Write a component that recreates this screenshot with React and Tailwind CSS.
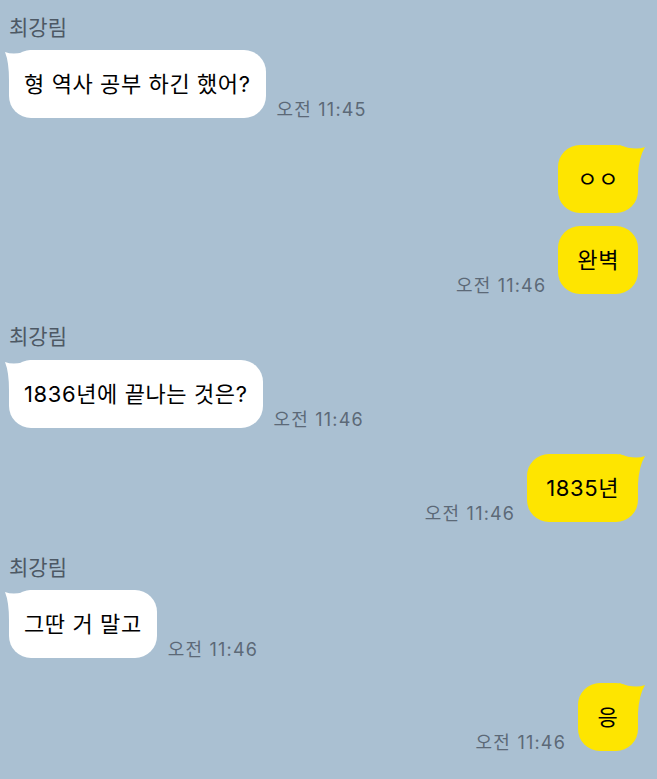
import React from 'react';

const font = { fontFamily: 'Inter, "Noto Sans CJK KR", "Noto Sans", sans-serif' };

function LeftTail() {
  return (
    <svg className="absolute -left-[4px] top-0" width="28" height="30" viewBox="0 0 28 30">
      <path d="M0 2 Q10 6 26 0 L26 18 L4 30 Q4 12 0 2 Z" fill="#ffffff" />
    </svg>
  );
}

function RightTail() {
  return (
    <svg className="absolute -right-[7px] top-0" width="28" height="30" viewBox="0 0 28 30">
      <path d="M28 2 Q18 6 2 0 L2 18 L21 30 Q22 12 28 2 Z" fill="#fee500" />
    </svg>
  );
}

function Name({ className = '' }) {
  return (
    <div className={`pl-[9px] text-[21px] leading-[24px] text-[#4d5864] ${className}`}>최강림</div>
  );
}

function Time({ children }) {
  return (
    <span className="text-[18px] leading-[16px] tracking-[1.2px] text-[#5c6977] whitespace-nowrap">
      {children}
    </span>
  );
}

function LeftBubble({ text, time, className = '' }) {
  return (
    <div className={`flex items-end gap-[11px] pl-[9px] ${className}`}>
      <div className="relative">
        <LeftTail />
        <div className="relative h-[68px] flex items-center bg-white rounded-[22px] px-[15px] text-[22px] tracking-[0.6px] text-black whitespace-nowrap">
          {text}
        </div>
      </div>
      {time && <Time>{time}</Time>}
    </div>
  );
}

function RightBubble({ text, time, className = '' }) {
  return (
    <div className={`flex items-end justify-end gap-[12px] pr-[19px] ${className}`}>
      {time && <Time>{time}</Time>}
      <div className="relative">
        {text.tail && <RightTail />}
        <div className="relative h-[68px] min-w-[60px] flex items-center justify-center bg-[#fee500] rounded-[22px] px-[19px] text-[22px] tracking-[0.6px] text-black whitespace-nowrap">
          {text.body}
        </div>
      </div>
    </div>
  );
}

export default function App() {
  return (
    <div className="w-[657px] h-[779px] bg-[#aac0d2] pt-[16px] overflow-hidden" style={font}>
      <Name />
      <LeftBubble className="mt-[10px]" text="형 역사 공부 하긴 했어?" time="오전 11:45" />
      <RightBubble className="mt-[27px]" text={{ body: 'ㅇㅇ', tail: true }} />
      <RightBubble className="mt-[13px]" text={{ body: '완벽', tail: false }} time="오전 11:46" />

      <Name className="mt-[31px]" />
      <LeftBubble className="mt-[11px]" text="1836년에 끝나는 것은?" time="오전 11:46" />
      <RightBubble className="mt-[26px]" text={{ body: '1835년', tail: true }} time="오전 11:46" />

      <Name className="mt-[34px]" />
      <LeftBubble className="mt-[10px]" text="그딴 거 말고" time="오전 11:46" />
      <RightBubble className="mt-[25px]" text={{ body: '응', tail: true }} time="오전 11:46" />
    </div>
  );
}
